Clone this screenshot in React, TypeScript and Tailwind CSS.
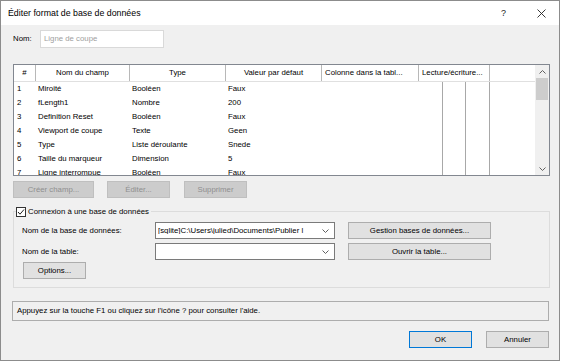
import React from "react";

const rows = [
  ["1", "Miroité", "Booléen", "Faux"],
  ["2", "fLength1", "Nombre", "200"],
  ["3", "Definition Reset", "Booléen", "Faux"],
  ["4", "Viewport de coupe", "Texte", "Geen"],
  ["5", "Type", "Liste déroulante", "Snede"],
  ["6", "Taille du marqueur", "Dimension", "5"],
  ["7", "Ligne interrompue", "Booléen", "Faux"],
];

function Chevron({ up = false }: { up?: boolean }) {
  return (
    <svg width="7" height="4" viewBox="0 0 7 4">
      <polyline
        points={up ? "0.5,3.5 3.5,0.5 6.5,3.5" : "0.5,0.5 3.5,3.5 6.5,0.5"}
        fill="none"
        stroke="#606060"
        strokeWidth="1"
      />
    </svg>
  );
}

function Btn({
  w,
  children,
  disabled = false,
  primary = false,
}: {
  w: string;
  children: React.ReactNode;
  disabled?: boolean;
  primary?: boolean;
}) {
  const base = "h-[17px] flex items-center justify-center border leading-none whitespace-nowrap ";
  const cls = disabled
    ? "bg-[#cccccc] border-[#bfbfbf] text-[#8f8f8f]"
    : primary
    ? "bg-[#e1e1e1] border-[#0078d7] text-black"
    : "bg-[#e1e1e1] border-[#adadad] text-black";
  return <div className={base + cls + " " + w}>{children}</div>;
}

function Combo({ text }: { text: string }) {
  return (
    <div className="w-[180px] h-[17px] bg-white border border-[#7a7a7a] flex items-center pl-[2px] pr-[5px]">
      <div className="flex-1 overflow-hidden whitespace-nowrap leading-none">{text}</div>
      <Chevron />
    </div>
  );
}

export default function App() {
  return (
    <div className="w-[562px] h-[364px] bg-white font-['Liberation_Sans',Arial,sans-serif] text-[7.8px] text-black">
      <div className="w-[560px] h-[361px] border border-[#8c8c8c] bg-[#f0f0f0] flex flex-col">
        {/* Title bar */}
        <div className="h-[24px] bg-white flex items-center pl-[7px] shrink-0">
          <div className="flex-1 text-[8.8px] leading-none">Éditer format de base de données</div>
          <div className="text-[9px] leading-none text-[#222] w-[10px] mr-[26px]">?</div>
          <div className="mr-[13px]">
            <svg width="9" height="9" viewBox="0 0 9 9">
              <line x1="0.5" y1="0.5" x2="8.5" y2="8.5" stroke="#222" strokeWidth="0.9" />
              <line x1="8.5" y1="0.5" x2="0.5" y2="8.5" stroke="#222" strokeWidth="0.9" />
            </svg>
          </div>
        </div>

        {/* Body */}
        <div className="flex flex-col pl-[12px]">
          {/* Nom row */}
          <div className="mt-[5px] h-[18px] flex items-center">
            <div className="w-[27px] leading-none">Nom:</div>
            <div className="w-[124px] h-[18px] bg-white border border-[#d9d9d9] flex items-center pl-[3px] text-[#a0a0a0] leading-none">
              Ligne de coupe
            </div>
          </div>

          {/* List view */}
          <div className="mt-[16px] w-[537px] h-[112px] bg-white border border-[#828790] flex overflow-hidden">
            <div className="w-[521px] flex flex-col">
              {/* header */}
              <div className="h-[17px] flex border-b border-[#e0e0e0] shrink-0">
                <div className="w-[22px] border-r border-[#b8b8b8] flex items-center justify-center">#</div>
                <div className="w-[94px] border-r border-[#b8b8b8] flex items-center justify-center">Nom du champ</div>
                <div className="w-[96px] border-r border-[#b8b8b8] flex items-center justify-center">Type</div>
                <div className="w-[96px] border-r border-[#b8b8b8] flex items-center justify-center">Valeur par défaut</div>
                <div className="w-[97px] border-r border-[#b8b8b8] flex items-center pl-[3px] whitespace-nowrap overflow-hidden">Colonne dans la tabl...</div>
                <div className="w-[71px] border-r border-[#b8b8b8] flex items-center pl-[3px] whitespace-nowrap overflow-hidden">Lecture/écriture...</div>
                <div className="w-[45px]" />
              </div>
              {/* body */}
              <div className="flex flex-1 overflow-hidden">
                <div className="w-[429px] border-r border-[#a8a8a8] flex flex-col">
                  {rows.map((r) => (
                    <div key={r[0]} className="h-[14px] flex items-center shrink-0 whitespace-nowrap">
                      <div className="w-[22px] pl-[3px]">{r[0]}</div>
                      <div className="w-[94px] pl-[2px]">{r[1]}</div>
                      <div className="w-[96px] pl-[2px]">{r[2]}</div>
                      <div className="w-[96px] pl-[2px]">{r[3]}</div>
                    </div>
                  ))}
                </div>
                <div className="w-[23px] border-r border-[#a8a8a8]" />
                <div className="w-[24px] border-r border-[#a8a8a8]" />
                <div className="w-[45px]" />
              </div>
            </div>
            {/* scrollbar */}
            <div className="w-[14px] bg-[#f0f0f0] flex flex-col">
              <div className="h-[13px] flex items-center justify-center">
                <Chevron up />
              </div>
              <div className="flex-1 flex flex-col px-[1px]">
                <div className="h-[22px] bg-[#cdcdcd]" />
              </div>
              <div className="h-[13px] flex items-center justify-center">
                <Chevron />
              </div>
            </div>
          </div>

          {/* disabled buttons */}
          <div className="mt-[5px] flex">
            <Btn w="w-[81px]" disabled>Créer champ...</Btn>
            <div className="w-[13px]" />
            <Btn w="w-[63px]" disabled>Éditer...</Btn>
            <div className="w-[14px]" />
            <Btn w="w-[63px]" disabled>Supprimer</Btn>
          </div>

          {/* Group box */}
          <fieldset className="mt-[8px] w-[537px] border border-[#dcdcdc] pl-[8px] pb-[8px]">
            <legend className="-ml-[6px] flex items-center h-[11px] pr-[2px]">
              <span className="w-[10px] h-[10px] bg-white border border-[#333] flex items-center justify-center mr-[2px]">
                <svg width="8" height="8" viewBox="0 0 8 8">
                  <polyline points="1,4 3,6.2 7,1.5" fill="none" stroke="#222" strokeWidth="1" />
                </svg>
              </span>
              <span className="leading-none">Connexion à une base de données</span>
            </legend>
            <div className="pt-[5px] flex flex-col">
              <div className="flex items-center h-[17px]">
                <div className="w-[133px] leading-none">Nom de la base de données:</div>
                <Combo text="[sqlite]C:\Users\julied\Documents\Publier l" />
                <div className="w-[13px]" />
                <Btn w="w-[143px]">Gestion bases de données...</Btn>
              </div>
              <div className="flex items-center h-[17px] mt-[4px]">
                <div className="w-[133px] leading-none">Nom de la table:</div>
                <Combo text="" />
                <div className="w-[13px]" />
                <Btn w="w-[143px]">Ouvrir la table...</Btn>
              </div>
              <div className="mt-[2px] ml-[1px]">
                <Btn w="w-[63px]">Options...</Btn>
              </div>
            </div>
          </fieldset>

          {/* Help box */}
          <div className="mt-[13px] -ml-[1px] w-[537px] h-[20px] border border-[#adadad] flex items-center pl-[4px] leading-none">
            Appuyez sur la touche F1 ou cliquez sur l'icône ? pour consulter l'aide.
          </div>

          {/* OK / Annuler */}
          <div className="mt-[10px] flex justify-end pr-[10px]">
            <Btn w="w-[63px]" primary>OK</Btn>
            <div className="w-[14px]" />
            <Btn w="w-[63px]">Annuler</Btn>
          </div>
        </div>
      </div>
    </div>
  );
}
